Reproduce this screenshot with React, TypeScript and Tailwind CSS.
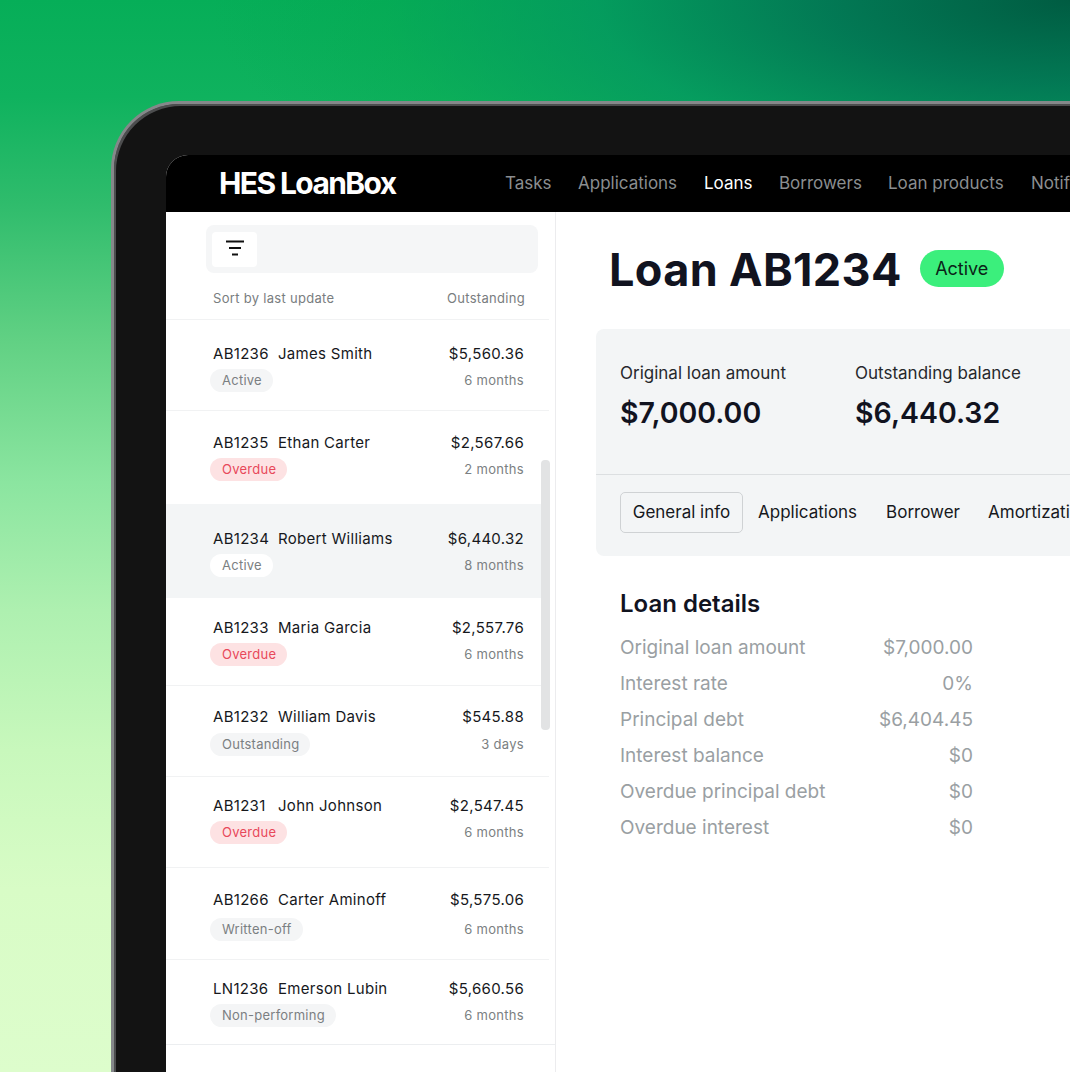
import React from 'react';

const navItems = [
  { label: 'Tasks', className: 'w-[73px]' },
  { label: 'Applications', className: 'w-[126px]' },
  { label: 'Loans', className: 'w-[75px] text-white' },
  { label: 'Borrowers', className: 'w-[109px]' },
  { label: 'Loan products', className: 'w-[143px]' },
  { label: 'Notifications', className: 'w-[120px]' },
];

const badgeStyles: Record<string, string> = {
  default: 'bg-[#f4f5f6] text-[#7b7f82]',
  selected: 'bg-white text-[#7b7f82]',
  overdue: 'bg-[#fde2e3] text-[#e8485a]',
};

const loans = [
  { id: 'AB1236', name: 'James Smith', amount: '$5,560.36', term: '6 months', status: 'Active', tone: 'default', row: 'h-[91px] pt-[23px] mr-[6px] pr-[25px] border-b border-[#f1f2f3]', gap: 'mt-[4px]' },
  { id: 'AB1235', name: 'Ethan Carter', amount: '$2,567.66', term: '2 months', status: 'Overdue', tone: 'overdue', row: 'h-[93px] pt-[21px] mr-[6px] pr-[25px]', gap: 'mt-[4px]' },
  { id: 'AB1234', name: 'Robert Williams', amount: '$6,440.32', term: '8 months', status: 'Active', tone: 'selected', row: 'h-[94px] pt-[24px] mr-[14px] pr-[17px] bg-[#f3f5f6]', gap: 'mt-[4px]' },
  { id: 'AB1233', name: 'Maria Garcia', amount: '$2,557.76', term: '6 months', status: 'Overdue', tone: 'overdue', row: 'h-[88px] pt-[19px] mr-[6px] pr-[25px] border-b border-[#f1f2f3]', gap: 'mt-[4px]' },
  { id: 'AB1232', name: 'William Davis', amount: '$545.88', term: '3 days', status: 'Outstanding', tone: 'default', row: 'h-[91px] pt-[20px] mr-[6px] pr-[25px] border-b border-[#f1f2f3]', gap: 'mt-[5px]' },
  { id: 'AB1231', name: 'John Johnson', amount: '$2,547.45', term: '6 months', status: 'Overdue', tone: 'overdue', row: 'h-[91px] pt-[18px] mr-[6px] pr-[25px] border-b border-[#f1f2f3]', gap: 'mt-[4px]' },
  { id: 'AB1266', name: 'Carter Aminoff', amount: '$5,575.06', term: '6 months', status: 'Written-off', tone: 'default', row: 'h-[92px] pt-[21px] mr-[6px] pr-[25px] border-b border-[#f1f2f3]', gap: 'mt-[7px]' },
  { id: 'LN1236', name: 'Emerson Lubin', amount: '$5,660.56', term: '6 months', status: 'Non-performing', tone: 'default', row: 'h-[85px] pt-[18px] pr-[31px] border-b border-[#eceef0]', gap: 'mt-[4px]' },
];

const details = [
  ['Original loan amount', '$7,000.00'],
  ['Interest rate', '0%'],
  ['Principal debt', '$6,404.45'],
  ['Interest balance', '$0'],
  ['Overdue principal debt', '$0'],
  ['Overdue interest', '$0'],
];

const App: React.FC = () => {
  return (
    <div className="h-screen w-full overflow-hidden pt-[101px] pl-[111px] font-[Inter,sans-serif] bg-[radial-gradient(860px_300px_at_100%_0%,#005c42_0%,rgba(2,118,84,0.95)_28%,rgba(3,150,95,0.75)_55%,rgba(4,166,80,0.35)_80%,rgba(4,170,85,0)_100%),linear-gradient(180deg,#06ae58_0%,#0fb25e_9%,#2fbc6c_19%,#62d184_32%,#8be5a0_45%,#aef0b0_57%,#c8f8bc_70%,#d8fcc6_83%,#ddfdcc_100%)]">
      {/* Laptop frame */}
      <div className="h-[1200px] rounded-tl-[68px] border-t-[3px] border-l-[3px] border-[#85888a] bg-[#131313] pt-[51px] pl-[52px] shadow-[inset_2px_2px_0_#4c4d4e]">
        <div className="h-full overflow-hidden rounded-tl-[22px] bg-white">
          {/* Top bar */}
          <div className="flex h-[57px] items-center overflow-hidden bg-black pl-[53px] whitespace-nowrap">
            <span className="w-[286px] shrink-0 text-[30px] font-bold tracking-[-1.6px] text-white">HES LoanBox</span>
            {navItems.map((item) => (
              <span key={item.label} className={`shrink-0 text-[17px] text-[#8b8e90] ${item.className}`}>
                {item.label}
              </span>
            ))}
          </div>

          <div className="flex min-h-[1000px]">
            {/* Loan list */}
            <div className="relative w-[390px] shrink-0 border-r border-[#ececee]">
              <div className="pt-[13px] pl-[40px] pr-[17px]">
                <div className="flex h-[48px] items-center rounded-lg bg-[#f5f6f7] pl-[6px]">
                  <div className="flex h-[35px] w-[45px] items-center justify-center rounded bg-white">
                    <svg width="20" height="18" viewBox="0 0 20 18" fill="none" stroke="#111" strokeWidth="2">
                      <path d="M1 1.5h18M4 8h12M7 14.5h6" />
                    </svg>
                  </div>
                </div>
              </div>
              <div className="mr-[6px] flex h-[47px] items-center justify-between border-b border-[#f1f2f3] pt-[5px] pr-[24px] pl-[47px] text-[13px] tracking-[0.3px] text-[#797d80]">
                <span>Sort by last update</span>
                <span>Outstanding</span>
              </div>
              {loans.map((loan) => (
                <div key={loan.id} className={`pl-[47px] ${loan.row}`}>
                  <div className="flex items-center justify-between text-[15px] leading-[22px] tracking-[0.3px] text-[#16181c]">
                    <span className="flex">
                      <span className="w-[65px]">{loan.id}</span>
                      <span>{loan.name}</span>
                    </span>
                    <span>{loan.amount}</span>
                  </div>
                  <div className={`flex items-center justify-between ${loan.gap}`}>
                    <span className={`-ml-[3px] rounded-full pr-[11px] pl-[12px] text-[13px] leading-[23px] tracking-[0.25px] ${badgeStyles[loan.tone]}`}>
                      {loan.status}
                    </span>
                    <span className="text-[13px] tracking-[0.3px] text-[#7b7f82]">{loan.term}</span>
                  </div>
                </div>
              ))}
              {/* Scrollbar */}
              <div className="absolute top-[248px] left-[375px] h-[270px] w-[9px] rounded-sm bg-[#e2e3e4]" />
            </div>

            {/* Loan detail */}
            <div className="min-w-0 flex-1 pl-[40px]">
              <div className="flex items-center pt-[34px] pl-[13px]">
                <h1 className="pt-[4px] text-[45px] leading-[40px] font-bold tracking-[0.35px] whitespace-nowrap text-[#11131f]">Loan AB1234</h1>
                <span className="ml-[18px] flex h-[37px] w-[84px] items-center justify-center rounded-full bg-[#3bef7c] text-[18px] text-[#0b2418]">
                  Active
                </span>
              </div>

              <div className="mt-[39px] h-[227px] overflow-hidden rounded-l-lg bg-[#f3f5f6]">
                <div className="flex h-[146px] border-b border-[#dcdfe1] pt-[33px] pl-[24px]">
                  <div className="w-[235px]">
                    <div className="text-[17px] leading-[22px] text-[#26282c]">Original loan amount</div>
                    <div className="mt-[10px] text-[28.5px] leading-[38px] font-semibold text-[#11131f]">$7,000.00</div>
                  </div>
                  <div>
                    <div className="text-[17px] leading-[22px] text-[#26282c]">Outstanding balance</div>
                    <div className="mt-[10px] text-[28.5px] leading-[38px] font-semibold text-[#11131f]">$6,440.32</div>
                  </div>
                </div>
                <div className="flex items-center pt-[17px] pl-[24px] text-[17px] whitespace-nowrap text-[#16181c]">
                  <span className="flex h-[41px] w-[123px] shrink-0 items-center justify-center rounded-[5px] border border-[#cfd2d4]">General info</span>
                  <span className="ml-[15px]">Applications</span>
                  <span className="ml-[29px]">Borrower</span>
                  <span className="ml-[28px]">Amortization</span>
                </div>
              </div>

              <div className="w-[377px] pt-[33px] pl-[24px]">
                <h2 className="text-[24px] leading-[30px] font-semibold text-[#11131f]">Loan details</h2>
                <div className="mt-[11px]">
                  {details.map(([label, value]) => (
                    <div key={label} className="flex h-[36px] items-center justify-between text-[19px] text-[#9a9fa3]">
                      <span>{label}</span>
                      <span>{value}</span>
                    </div>
                  ))}
                </div>
              </div>
            </div>
          </div>
        </div>
      </div>
    </div>
  );
};

export default App;
